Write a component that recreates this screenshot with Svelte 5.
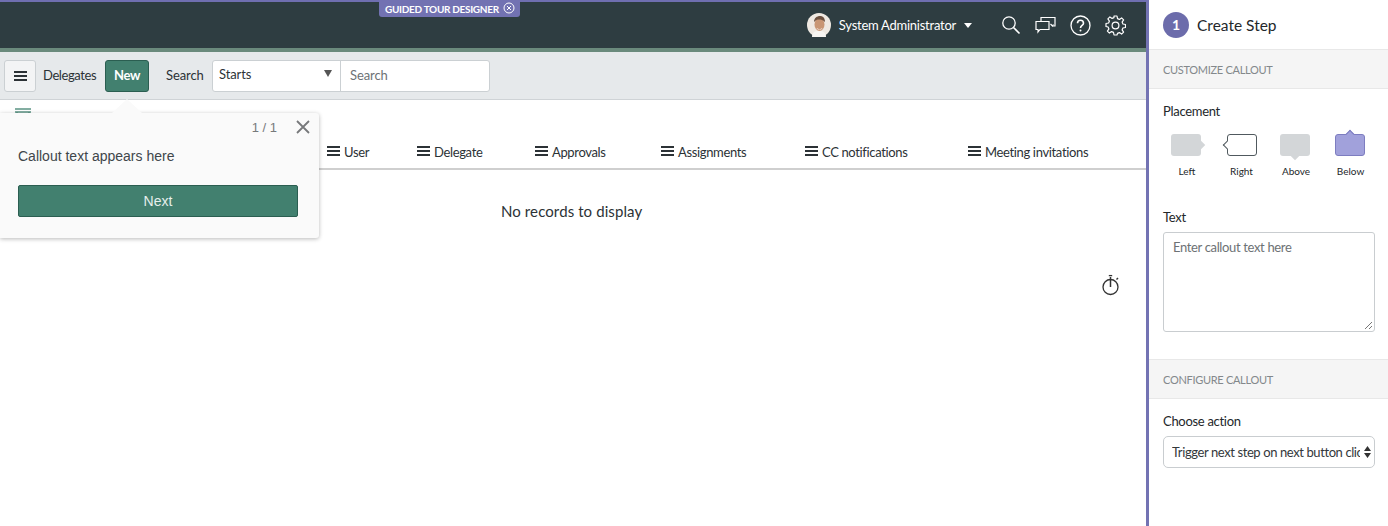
<script lang="ts">
	const columns = [
		{ label: 'User', width: 90 },
		{ label: 'Delegate', width: 118 },
		{ label: 'Approvals', width: 126 },
		{ label: 'Assignments', width: 144 },
		{ label: 'CC notifications', width: 163 },
		{ label: 'Meeting invitations', width: 170 }
	];
	const placements = [
		{ label: 'Left', kind: 'left' },
		{ label: 'Right', kind: 'right' },
		{ label: 'Above', kind: 'above' },
		{ label: 'Below', kind: 'below' }
	];
</script>

<div class="page">
	<main class="main">
		<header class="topbar">
			<div class="tour-tag">
				GUIDED TOUR DESIGNER
				<svg width="12" height="12" viewBox="0 0 12 12" fill="none" stroke="#fff" stroke-width="1">
					<circle cx="6" cy="6" r="5" />
					<path d="M4 4l4 4M8 4l-4 4" />
				</svg>
			</div>
			<div class="user">
				<svg class="avatar" width="24" height="24" viewBox="0 0 24 24">
					<circle cx="12" cy="12" r="12" fill="#efe9e2" />
					<path d="M5 24c0-5 3-6 7-6s7 1 7 6z" fill="#f7f5f2" />
					<ellipse cx="12.500" cy="11.500" rx="5" ry="6.500" fill="#c99674" />
					<path d="M7 9c0-4 3-6 6-6s5 2 5 6c-2-2-4-2.500-6-2.500S9 7 7 9z" fill="#6d5140" />
					<path d="M9.500 15c2 1.500 4 1.500 6 0-1 2-5 2-6 0z" fill="#fff" />
				</svg>
				<span class="user-name">System Administrator</span>
				<span class="caret"></span>
			</div>
			<div class="top-icons">
				<svg width="20" height="20" viewBox="0 0 20 20" fill="none" stroke="#fff" stroke-width="1.300">
					<circle cx="8" cy="8" r="6.200" />
					<path d="M12.500 12.500l6 6" stroke-width="1.600" />
				</svg>
				<svg width="21" height="18" viewBox="0 0 21 18" fill="none" stroke="#fff" stroke-width="1.200">
					<path d="M6 5V1.500h14v8.500h-2" />
					<path d="M1 5.500h13v8H5l-2 2.500v-2.500H1z" />
					<path d="M15.500 8l2 2 1-1.500" />
				</svg>
				<svg width="21" height="21" viewBox="0 0 21 21" fill="none" stroke="#fff" stroke-width="1.300">
					<circle cx="10.500" cy="10.500" r="9.500" />
					<path d="M7.500 8.200c0-4 6-4 6 0 0 2.300-3 2.300-3 4.800" stroke-width="1.600" />
					<circle cx="10.500" cy="15.500" r="1" fill="#fff" stroke="none" />
				</svg>
				<svg width="21" height="21" viewBox="0 0 21 21" fill="none" stroke="#fff" stroke-width="1.200">
					<circle cx="10.500" cy="10.500" r="3.400" />
					<path d="M9 1h3l.5 2.600 1.900.8 2.200-1.500 2 2-1.500 2.200.8 1.900 2.600.5v3l-2.600.5-.8 1.900 1.500 2.200-2 2-2.200-1.500-1.900.8L12 20H9l-.5-2.600-1.900-.8-2.200 1.500-2-2 1.500-2.200-.8-1.900L1 11.500v-3l2.600-.5.8-1.900L2.900 3.900l2-2 2.200 1.500 1.900-.8z" stroke-linejoin="round" />
				</svg>
			</div>
		</header>

		<div class="toolbar">
			<button class="menu-btn" aria-label="Menu">
				<span class="bars"></span>
			</button>
			<span class="list-title">Delegates</span>
			<button class="new-btn">New</button>
			<span class="search-label">Search</span>
			<div class="search-group">
				<div class="search-type">
					<span>Starts</span>
					<span class="type-caret"></span>
				</div>
				<div class="search-input">Search</div>
			</div>
		</div>

		<div class="table">
			<div class="table-head">
				{#each columns as col}
					<div class="col" style="width: {col.width}px">
						<span class="bars"></span>
						<span>{col.label}</span>
					</div>
				{/each}
			</div>
			<div class="empty">No records to display</div>

			<svg class="filter-icon" width="18" height="7" viewBox="0 0 18 7" fill="none" stroke="#5b9484" stroke-width="1.500">
				<path d="M1 1h16M1 4h16M3 4v3M15 4v3" />
			</svg>

			<svg class="timer" width="20" height="22" viewBox="0 0 20 22" fill="none" stroke="#333" stroke-width="1.300">
				<circle cx="9.500" cy="13" r="7.500" />
				<path d="M9.500 3v10" stroke-width="1.500" />
				<path d="M7.800 1.600h3.400" stroke-width="1.300" />
				<path d="M15.500 5.500l1.500-1.500" stroke-width="1.500" />
			</svg>

			<div class="callout">
				<span class="callout-tip"></span>
				<div class="callout-top">
					<span class="count">1 / 1</span>
					<svg width="14" height="14" viewBox="0 0 14 14" stroke="#77797b" stroke-width="1.800" fill="none">
						<path d="M1 1l12 12M13 1L1 13" />
					</svg>
				</div>
				<p class="callout-text">Callout text appears here</p>
				<button class="next-btn">Next</button>
			</div>
		</div>
	</main>

	<aside class="panel">
		<div class="panel-head">
			<span class="step-num">1</span>
			<span class="step-title">Create Step</span>
		</div>
		<div class="section-head first">CUSTOMIZE CALLOUT</div>
		<div class="field placement">
			<div class="field-label">Placement</div>
			<div class="placements">
				{#each placements as p}
					<div class="place">
						<span class="bubble {p.kind}"></span>
						<span class="place-label">{p.label}</span>
					</div>
				{/each}
			</div>
		</div>
		<div class="field text-field">
			<div class="field-label">Text</div>
			<div class="textarea">
				Enter callout text here
				<svg class="grip" width="9" height="9" viewBox="0 0 9 9" stroke="#777" stroke-width="1" fill="none">
					<path d="M1 8l7-7M5 8l3-3" />
				</svg>
			</div>
		</div>
		<div class="section-head">CONFIGURE CALLOUT</div>
		<div class="field action">
			<div class="field-label">Choose action</div>
			<div class="select">
				<span class="select-text">Trigger next step on next button click</span>
				<svg width="7" height="12" viewBox="0 0 7 12" fill="#333">
					<path d="M3.500 0L7 5H0zM3.500 12L0 7h7z" />
				</svg>
			</div>
		</div>
	</aside>
</div>

<style>
	:global(body) {
		margin: 0;
		background: #fff;
	}
	.page {
		display: flex;
		width: 1388px;
		height: 526px;
		overflow: hidden;
		font-family: Lato, sans-serif;
		color: #2c3236;
	}
	.main {
		width: 1146px;
		flex: none;
		display: flex;
		flex-direction: column;
		border-top: 2px solid #6f6fb0;
		box-sizing: border-box;
	}
	.panel {
		flex: 1;
		border-left: 3px solid #7373b3;
		background: #fff;
		box-sizing: border-box;
	}

	.topbar {
		position: relative;
		height: 50px;
		box-sizing: border-box;
		background: #2e3d41;
		border-bottom: 4px solid #6a8a7c;
		display: flex;
		align-items: center;
		justify-content: flex-end;
		padding-right: 20px;
	}
	.tour-tag {
		position: absolute;
		top: -2px;
		left: 379px;
		height: 17px;
		width: 141px;
		box-sizing: border-box;
		background: #7272b2;
		border-radius: 0 0 3px 3px;
		color: #fff;
		font-size: 10px;
		font-weight: 700;
		letter-spacing: -0.3px;
		display: flex;
		align-items: center;
		gap: 4px;
		padding-left: 6px;
		white-space: nowrap;
	}
	.tour-tag svg {
		flex: none;
		margin-top: -2px;
	}
	.user {
		display: flex;
		align-items: center;
		color: #fff;
		font-size: 13px;
		letter-spacing: -0.25px;
		margin-right: 29px;
	}
	.avatar {
		margin-right: 8px;
	}
	.user-name {
		margin-right: 8px;
	}
	.caret {
		border: 4px solid transparent;
		border-top: 5px solid #fff;
		border-bottom: 0;
		width: 0;
		height: 0;
	}
	.top-icons {
		display: flex;
		align-items: center;
		gap: 14px;
	}

	.toolbar {
		height: 48px;
		box-sizing: border-box;
		background: #e6e9eb;
		border-bottom: 1px solid #cfd3d6;
		display: flex;
		align-items: center;
		padding-left: 4px;
		font-size: 13px;
	}
	.menu-btn {
		width: 32px;
		height: 32px;
		padding: 0;
		background: #f3f4f5;
		border: 1px solid #cbd0d3;
		border-radius: 3px;
		display: flex;
		align-items: center;
		justify-content: center;
	}
	.bars {
		display: inline-block;
		width: 13px;
		height: 10px;
		box-sizing: border-box;
		border-top: 2px solid #2c3236;
		border-bottom: 2px solid #2c3236;
		position: relative;
		flex: none;
	}
	.bars::after {
		content: "";
		position: absolute;
		left: 0;
		right: 0;
		top: 2px;
		height: 2px;
		background: #2c3236;
	}
	.list-title {
		margin: 0 0 2px 7px;
		width: 62px;
		letter-spacing: -0.4px;
	}
	.new-btn {
		width: 44px;
		height: 32px;
		padding: 0 0 2px;
		background: #42806f;
		border: 1px solid #2b5e51;
		border-radius: 3px;
		color: #fff;
		font: 700 13px Lato, sans-serif;
		letter-spacing: -0.3px;
	}
	.search-label {
		margin: 0 0 2px 17px;
		width: 46px;
		letter-spacing: -0.1px;
	}
	.search-group {
		display: flex;
		height: 32px;
		background: #fff;
		border: 1px solid #cbd0d3;
		border-radius: 3px;
		box-sizing: border-box;
		letter-spacing: -0.1px;
	}
	.search-type {
		width: 128px;
		box-sizing: border-box;
		border-right: 1px solid #cbd0d3;
		padding: 5px 8px 0 6px;
		display: flex;
		justify-content: space-between;
		align-items: flex-start;
	}
	.type-caret {
		margin-top: 4px;
		border: 4px solid transparent;
		border-top: 7px solid #555;
		border-bottom: 0;
		width: 0;
		height: 0;
	}
	.search-input {
		width: 148px;
		box-sizing: border-box;
		padding: 6px 9px;
		color: #6d7275;
	}

	.table {
		position: relative;
		flex: 1;
		background: #fff;
	}
	.table-head {
		height: 70px;
		box-sizing: border-box;
		border-bottom: 2px solid #cfcfcf;
		padding: 43px 0 0 327px;
		display: flex;
		font-size: 13px;
		letter-spacing: -0.35px;
	}
	.col {
		display: flex;
		align-items: center;
		gap: 4px;
		height: 18px;
		flex: none;
	}
	.col .bars {
		margin-top: -2px;
	}
	.empty {
		margin-top: 31px;
		padding-left: 501px;
		font-size: 15px;
		line-height: 20px;
		letter-spacing: 0.1px;
	}
	.filter-icon {
		position: absolute;
		left: 14px;
		top: 8px;
	}
	.timer {
		position: absolute;
		left: 1101px;
		top: 174px;
	}
	.callout {
		position: absolute;
		left: 0;
		top: 13px;
		width: 319px;
		height: 125px;
		box-sizing: border-box;
		background: #fafafa;
		border-radius: 0 3px 3px 0;
		box-shadow: 0 1px 4px rgba(0, 0, 0, 0.28);
		padding: 0 21px 0 18px;
		font-family: "Liberation Sans", Arial, sans-serif;
	}
	.callout-tip {
		position: absolute;
		left: 112px;
		top: -14px;
		width: 0;
		height: 0;
		border: 15px solid transparent;
		border-top: 0;
		border-bottom: 14px solid #fafafa;
	}
	.callout-top {
		height: 28px;
		display: flex;
		align-items: center;
		justify-content: flex-end;
		gap: 19px;
		margin-right: -12px;
		color: #77797b;
		font-size: 13px;
	}
	.callout-text {
		margin: 5px 0 0;
		font-size: 14px;
		line-height: 20px;
		color: #40464a;
	}
	.next-btn {
		display: block;
		margin-top: 19px;
		width: 280px;
		height: 32px;
		padding: 0;
		background: #42806f;
		border: 1px solid #2b5e51;
		border-radius: 2px;
		color: #e6efec;
		font: 14px "Liberation Sans", Arial, sans-serif;
	}

	.panel-head {
		height: 49px;
		display: flex;
		align-items: center;
		padding-left: 14px;
		gap: 8px;
		box-sizing: border-box;
	}
	.step-num {
		width: 26px;
		height: 26px;
		border-radius: 50%;
		background: #6c6cab;
		color: #fff;
		font-size: 14px;
		font-weight: 700;
		display: flex;
		align-items: center;
		justify-content: center;
	}
	.step-title {
		font-size: 15.500px;
		color: #23272a;
	}
	.section-head {
		height: 40px;
		box-sizing: border-box;
		background: #f5f5f5;
		border-top: 1px solid #e8e8e8;
		border-bottom: 1px solid #e8e8e8;
		padding-left: 14px;
		display: flex;
		align-items: center;
		font-size: 11px;
		letter-spacing: -0.3px;
		color: #83888b;
	}
	.section-head.first {
		margin-top: 0;
	}
	.field {
		padding: 0 14px;
	}
	.field-label {
		font-size: 13px;
		line-height: 18px;
		letter-spacing: -0.3px;
		color: #23272a;
	}
	.placement {
		padding-top: 13px;
	}
	.placements {
		display: flex;
		margin-top: 11px;
		margin-left: 8px;
	}
	.place {
		width: 54.500px;
		display: flex;
		flex-direction: column;
		align-items: flex-start;
	}
	.bubble {
		position: relative;
		display: block;
		width: 30px;
		height: 22px;
		box-sizing: border-box;
		background: #d3d6d8;
		border-radius: 3px;
		margin: 3px 0 0;
	}
	.bubble::after {
		content: "";
		position: absolute;
		width: 6px;
		height: 6px;
		background: inherit;
		box-sizing: border-box;
		transform: rotate(45deg);
	}
	.bubble.left::after {
		right: -3px;
		top: 8px;
	}
	.bubble.right {
		background: #fff;
		border: 1px solid #50595e;
		margin-left: 1px;
	}
	.bubble.right::after {
		left: -4px;
		top: 7px;
		border-left: 1px solid #50595e;
		border-bottom: 1px solid #50595e;
	}
	.bubble.above::after {
		left: 12px;
		bottom: -3px;
	}
	.bubble.below {
		background: #a1a1db;
		border: 1px solid #7d7dc0;
	}
	.bubble.below::after {
		left: 11px;
		top: -4px;
		border-left: 1px solid #7d7dc0;
		border-top: 1px solid #7d7dc0;
	}
	.place-label {
		width: 32px;
		margin-top: 8px;
		font-size: 10px;
		line-height: 14px;
		text-align: center;
		color: #23272a;
	}
	.text-field {
		padding-top: 30px;
		height: 181px;
		box-sizing: border-box;
	}
	.textarea {
		position: relative;
		margin-top: 6px;
		width: 212px;
		height: 100px;
		box-sizing: border-box;
		border: 1px solid #c9cdd0;
		border-radius: 3px;
		padding: 5px 9px;
		font-size: 13px;
		line-height: 18px;
		letter-spacing: -0.35px;
		color: #6d7275;
	}
	.grip {
		position: absolute;
		right: 1px;
		bottom: 1px;
	}
	.action {
		padding-top: 13px;
	}
	.select {
		margin-top: 6px;
		width: 212px;
		height: 32px;
		box-sizing: border-box;
		border: 1px solid #c9cdd0;
		border-radius: 5px;
		padding: 0 3px 1px 8px;
		display: flex;
		align-items: center;
		justify-content: space-between;
		font-size: 13px;
		letter-spacing: -0.4px;
		color: #33383b;
	}
	.select-text {
		width: 188px;
		overflow: hidden;
		white-space: nowrap;
	}
</style>
